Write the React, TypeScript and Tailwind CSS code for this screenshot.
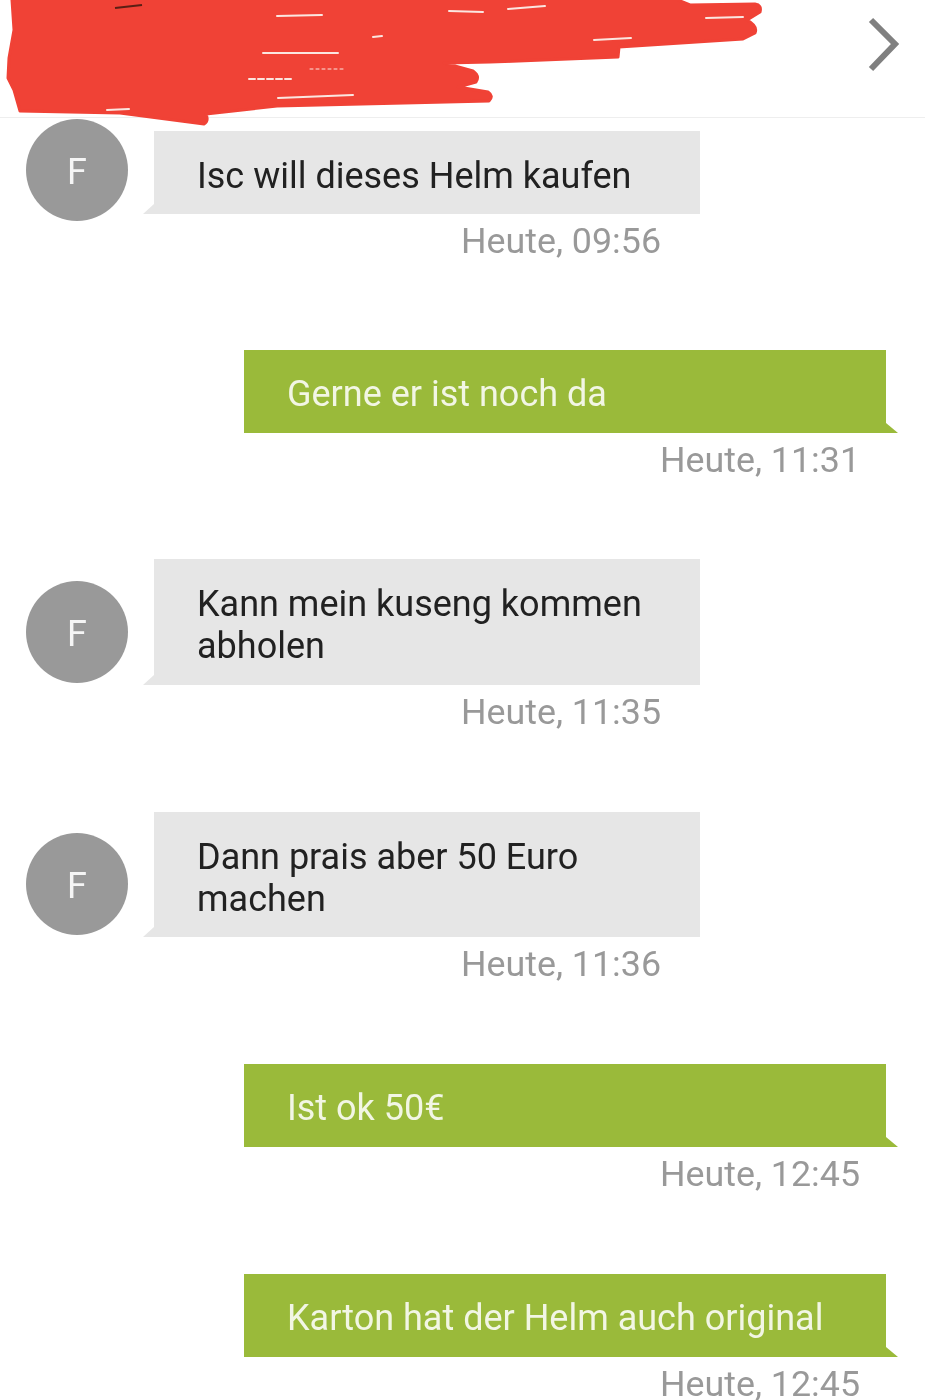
function Scribble() {
  return (
    <svg className="absolute left-0 top-0" width="925" height="130" viewBox="0 0 925 130" fill="none">
      <path
        d="M12 0 L678 0 L690 5 L755 4 Q762 5 760 12 L747 20 Q758 26 755 33 L743 39 L619 47 L618 57 L490 62 L444 63 L473 71 Q480 76 476 82 L458 87 L488 92 Q494 96 489 101 L277 106 L206 114 Q209 121 204 124 L120 113 L20 111 L14 90 L8 78 L9 58 L14 30 Z"
        fill="#f04236"
        stroke="#f04236"
        strokeWidth="3"
        strokeLinejoin="round"
      />
      <g stroke="#fbe6e0" strokeWidth="2" strokeLinecap="round">
        <path d="M277 16 L322 15" />
        <path d="M263 53 L338 53" />
        <path d="M449 11 L483 12" />
        <path d="M508 9 L545 6" />
        <path d="M594 40 L631 38" />
        <path d="M706 18 L743 17" />
        <path d="M278 98 L353 95" />
        <path d="M107 110 L129 109" />
        <path d="M373 37 L382 36" />
        <path d="M249 79 L294 79" strokeDasharray="6 3" />
        <path d="M310 69 L345 69" strokeWidth="1" strokeDasharray="3 3" />
      </g>
      <path d="M115 8 L142 5" stroke="#5a1f14" strokeWidth="2" />
    </svg>
  );
}

function Header() {
  return (
    <div className="relative h-[118px] border-b border-[#eeeeee] flex items-center justify-end pr-6">
      <Scribble />
      <svg width="34" height="56" viewBox="0 0 34 56" fill="none" className="mt-[-28px]">
        <path d="M4 3 L28 27 L4 52" stroke="#808080" strokeWidth="6" />
      </svg>
    </div>
  );
}

function Avatar({ className }: { className: string }) {
  return (
    <div className={`w-[102px] h-[102px] pt-[3px] rounded-full bg-[#999999] flex items-center justify-center text-[#f5f5f5] text-[36px] shrink-0 ${className}`}>
      F
    </div>
  );
}

function Incoming({ lines, time, avatarClass, bubbleClass, className }: { lines: string[]; time: string; avatarClass: string; bubbleClass: string; className: string }) {
  return (
    <div className={`flex pl-[26px] ${className}`}>
      <Avatar className={avatarClass} />
      <div className="ml-[26px] w-[546px]">
        <div className={`relative bg-[#e6e6e6] px-[43px] pt-[24px] text-[36px] leading-[42px] text-[#212121] ${bubbleClass}`}>
          <svg className="absolute left-[-11px] bottom-0" width="11" height="10" viewBox="0 0 11 10">
            <path d="M11 0 L11 10 L0 10 Z" fill="#e6e6e6" />
          </svg>
          {lines.map((line) => (
            <div key={line}>{line}</div>
          ))}
        </div>
        <div className="mt-[12px] pr-[39px] text-right text-[35.8px] leading-[30px] text-[#999999]">{time}</div>
      </div>
    </div>
  );
}

function Outgoing({ text, time, className }: { text: string; time: string; className: string }) {
  return (
    <div className={`ml-[244px] w-[642px] ${className}`}>
      <div className="relative h-[83px] bg-[#9aba3a] px-[43px] pt-[23px] text-[36px] leading-[42px] text-[#f2f6e4]">
        <svg className="absolute right-[-12px] bottom-0" width="12" height="10" viewBox="0 0 12 10">
          <path d="M0 0 L0 10 L12 10 Z" fill="#9aba3a" />
        </svg>
        {text}
      </div>
      <div className="mt-[12px] pr-[26px] text-right text-[35.8px] leading-[30px] text-[#999999]">{time}</div>
    </div>
  );
}

export default function App() {
  return (
    <div className="h-[1400px] w-[925px] overflow-hidden bg-white font-['Roboto',sans-serif] blur-[0.5px]">
      <Header />
      <Incoming lines={["Isc will dieses Helm kaufen"]} time="Heute, 09:56" avatarClass="mt-[-12px]" bubbleClass="h-[83px]" className="mt-[13px]" />
      <Outgoing text="Gerne er ist noch da" time="Heute, 11:31" className="mt-[94px]" />
      <Incoming lines={["Kann mein kuseng kommen", "abholen"]} time="Heute, 11:35" avatarClass="mt-[22px]" bubbleClass="h-[126px]" className="mt-[84px]" />
      <Incoming lines={["Dann prais aber 50 Euro", "machen"]} time="Heute, 11:36" avatarClass="mt-[21px]" bubbleClass="h-[125px]" className="mt-[85px]" />
      <Outgoing text="Ist ok 50€" time="Heute, 12:45" className="mt-[85px]" />
      <Outgoing text="Karton hat der Helm auch original" time="Heute, 12:45" className="mt-[85px]" />
    </div>
  );
}
